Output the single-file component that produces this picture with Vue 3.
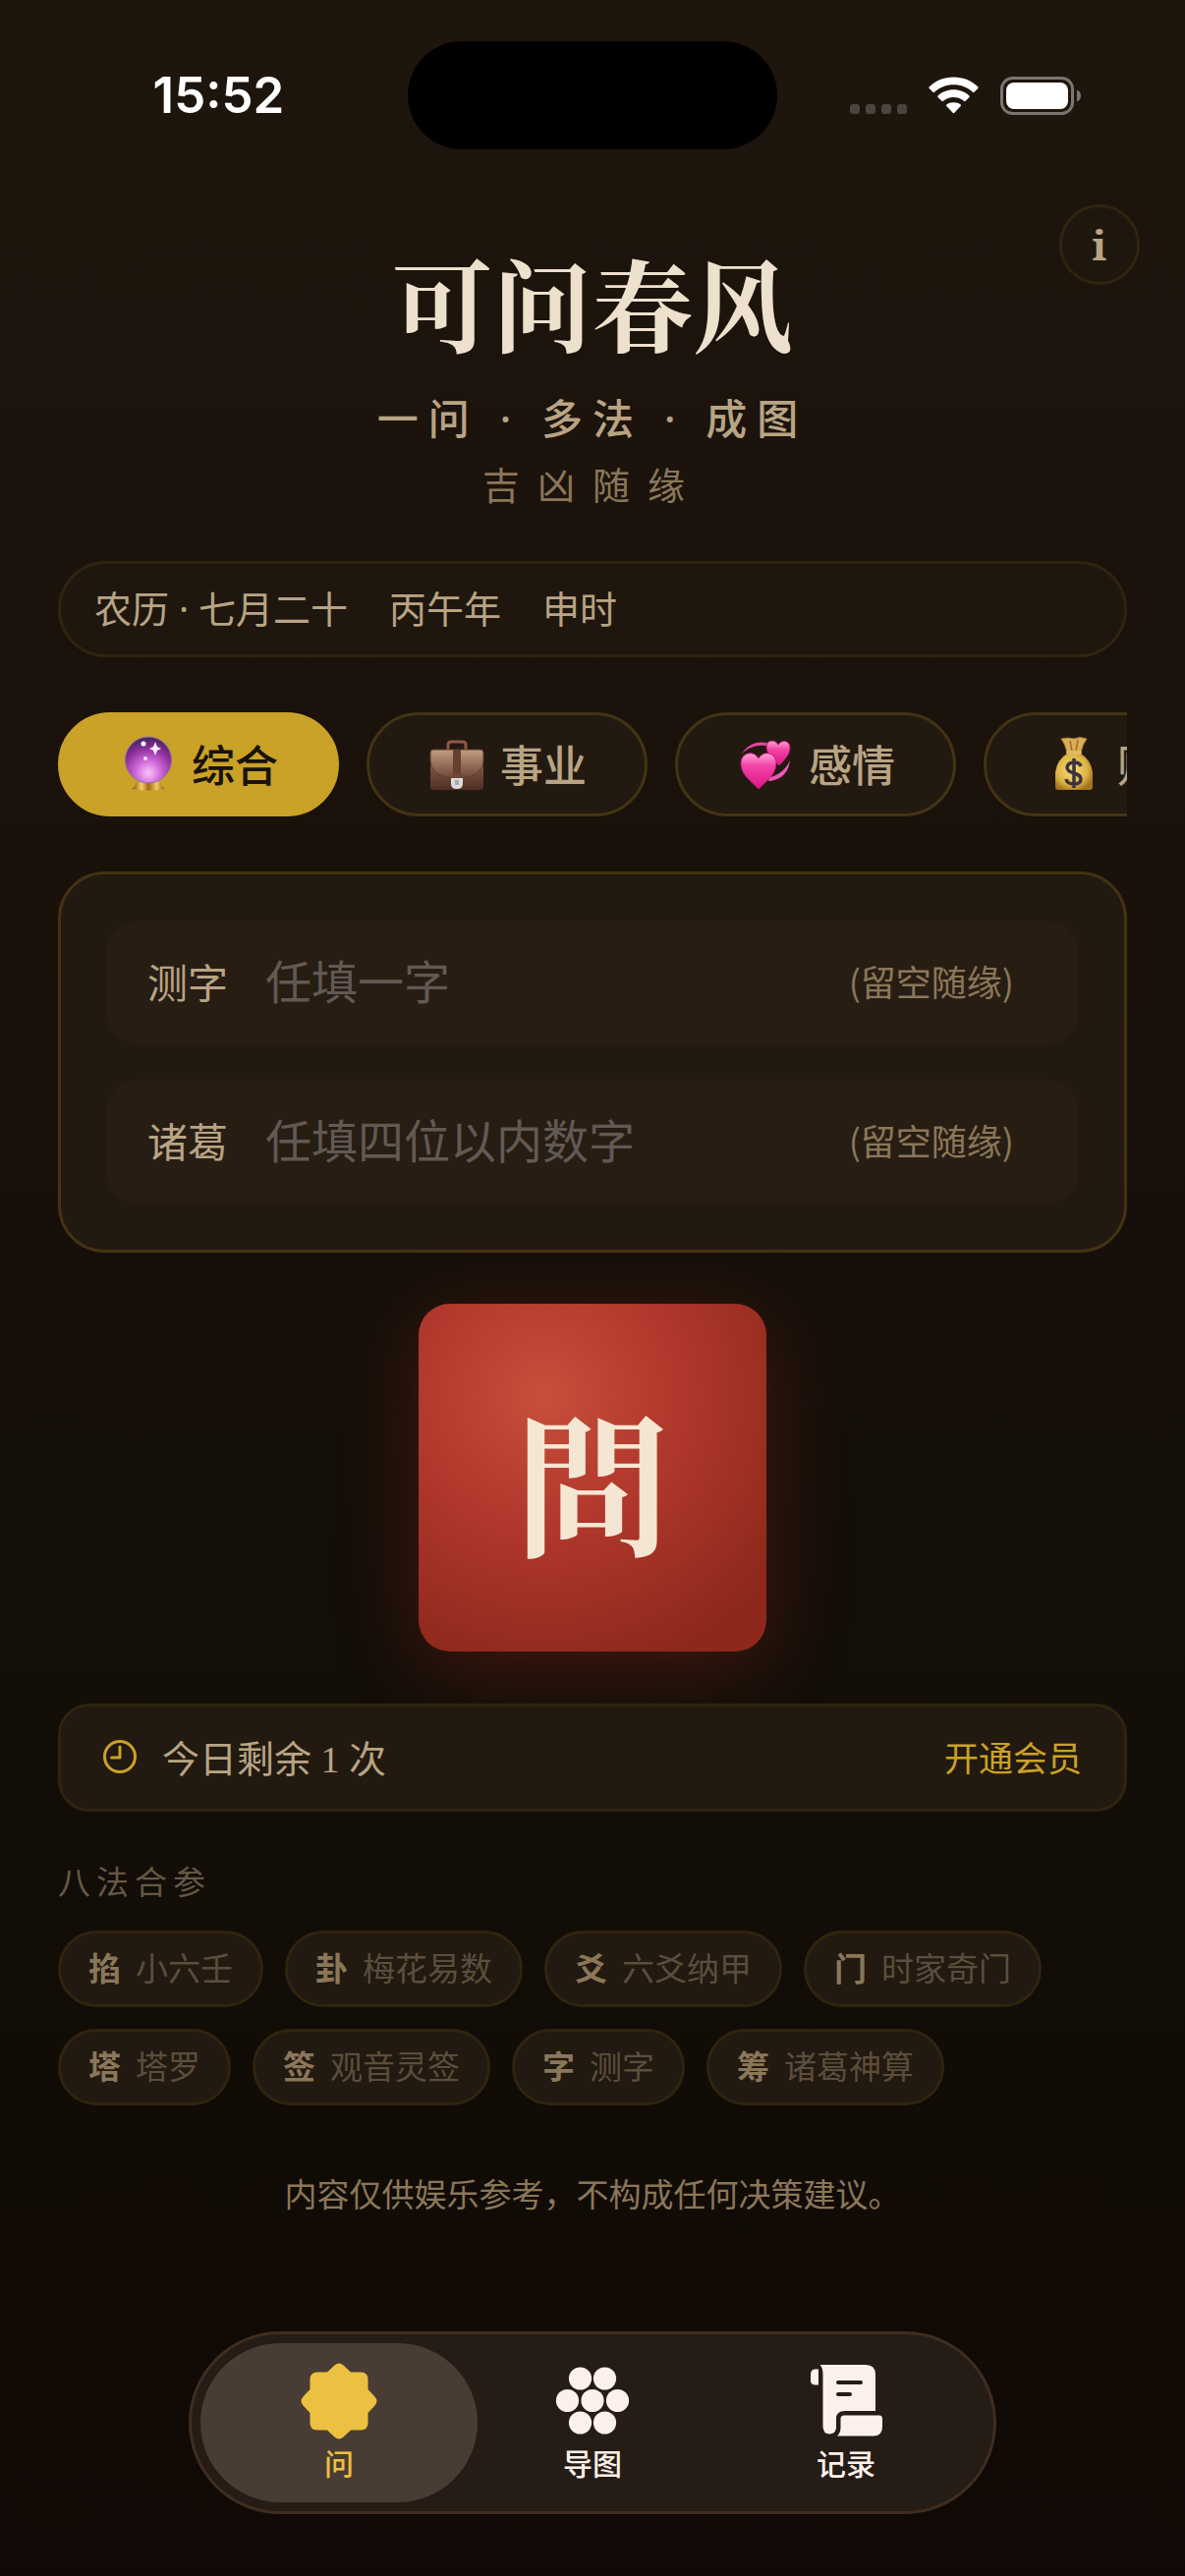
<script setup>
import { ref } from 'vue'

const topics = [
  { id: 'general', label: '综合' },
  { id: 'career', label: '事业' },
  { id: 'love', label: '感情' },
  { id: 'wealth', label: '财运' },
]
const activeTopic = ref('general')

const character = ref('')
const digits = ref('')

const methods = [
  { mark: '掐', name: '小六壬' },
  { mark: '卦', name: '梅花易数' },
  { mark: '爻', name: '六爻纳甲' },
  { mark: '门', name: '时家奇门' },
  { mark: '塔', name: '塔罗' },
  { mark: '签', name: '观音灵签' },
  { mark: '字', name: '测字' },
  { mark: '筹', name: '诸葛神算' },
]

const tabs = [
  { id: 'ask', label: '问' },
  { id: 'map', label: '导图' },
  { id: 'log', label: '记录' },
]
const activeTab = ref('ask')
</script>

<template>
  <div class="page">
    <div class="status">
      <span class="time">15:52</span>
      <span class="island"></span>
      <div class="signals">
        <svg class="dots" width="58" height="38" viewBox="0 0 58 38" fill="#4b443e">
          <rect x="0" y="28" width="10" height="10" rx="3" />
          <rect x="16" y="28" width="10" height="10" rx="3" />
          <rect x="32" y="28" width="10" height="10" rx="3" />
          <rect x="48" y="28" width="10" height="10" rx="3" />
        </svg>
        <svg width="51" height="38" viewBox="0 0 51 38" fill="#fff">
          <path d="M25.500 0.500C35.500 0.500 44 4.200 50.300 10.300Q51 11.200 50.300 12L46.500 15.800Q45.700 16.500 44.900 15.800C39.700 10.900 33 8.300 25.500 8.300S11.300 10.900 6.100 15.800Q5.300 16.500 4.500 15.800L0.700 12Q0 11.200 0.700 10.300C7 4.200 15.500 0.500 25.500 0.500Z" />
          <path d="M25.500 13.300C31.800 13.300 37.300 15.600 41.500 19.400Q42.200 20.200 41.500 21L37.600 24.800Q36.900 25.500 36 24.800C33.200 22.400 29.600 21 25.500 21S17.800 22.400 15 24.800Q14.100 25.500 13.400 24.800L9.500 21Q8.800 20.200 9.500 19.400C13.700 15.600 19.200 13.300 25.500 13.300Z" />
          <path d="M25.500 26.200C28.400 26.200 30.800 27 32.700 28.500Q33.500 29.300 32.700 30.100L26.400 36.800Q25.500 37.600 24.600 36.800L18.300 30.100Q17.500 29.300 18.300 28.500C20.200 27 22.600 26.200 25.500 26.200Z" />
        </svg>
        <svg width="82" height="39" viewBox="0 0 82 39">
          <rect x="1.500" y="1.500" width="72" height="36" rx="11" fill="none" stroke="#7b756f" stroke-width="3" />
          <rect x="6" y="6" width="63" height="27" rx="8" fill="#fff" />
          <path d="M78 13.500C80.500 14.500 82 16.800 82 19.500S80.500 24.500 78 25.500Z" fill="#7b756f" />
        </svg>
      </div>
    </div>

    <header class="hero">
      <button class="info" type="button" aria-label="关于">i</button>
      <h1>可问春风</h1>
      <p class="tagline">一问 · 多法 · 成图</p>
      <p class="motto">吉凶随缘</p>
    </header>

    <main class="content">
      <div class="lunar">
        <span>农历 · 七月二十</span>
        <span>丙午年</span>
        <span>申时</span>
      </div>

      <div class="topics">
        <button
          v-for="t in topics"
          :key="t.id"
          type="button"
          class="topic"
          :class="{ active: activeTopic === t.id }"
          @click="activeTopic = t.id"
        >
          <svg v-if="t.id === 'general'" class="emoji" viewBox="0 0 56 56">
            <defs>
              <radialGradient id="orb" cx="50%" cy="78%" r="75%">
                <stop offset="0" stop-color="#fbc4fb" />
                <stop offset=".35" stop-color="#cf6cda" />
                <stop offset=".7" stop-color="#92309f" />
                <stop offset="1" stop-color="#47265f" />
              </radialGradient>
              <linearGradient id="stand" x1="0" x2="1">
                <stop offset="0" stop-color="#7c4a12" />
                <stop offset=".3" stop-color="#f5d165" />
                <stop offset=".5" stop-color="#a8641b" />
                <stop offset=".75" stop-color="#f2cc5c" />
                <stop offset="1" stop-color="#8d5614" />
              </linearGradient>
            </defs>
            <path d="M16 46Q28 50 40 46Q41 52 45 54Q28 57 11 54Q15 52 16 46Z" fill="url(#stand)" />
            <circle cx="28" cy="24.500" r="23.500" fill="url(#orb)" stroke="#8f6fb0" stroke-width="1" />
            <path d="M35 6L37 11L41 13L37 15L35 20L33 15L29 13L33 11Z" fill="#ffe6ff" />
            <circle cx="23" cy="8" r="2.500" fill="#fff" />
            <circle cx="25" cy="23" r="2" fill="#fbdcff" />
          </svg>
          <svg v-else-if="t.id === 'career'" class="emoji" viewBox="0 0 56 56">
            <defs>
              <linearGradient id="bag" x1="0" x2="0" y1="0" y2="1">
                <stop offset="0" stop-color="#b98f73" />
                <stop offset=".4" stop-color="#805744" />
                <stop offset="1" stop-color="#4f2e25" />
              </linearGradient>
              <linearGradient id="flap" x1="0" x2="0" y1="0" y2="1">
                <stop offset="0" stop-color="#c39d80" />
                <stop offset="1" stop-color="#6c4434" />
              </linearGradient>
            </defs>
            <path d="M19 15V9Q19 6 22 6H34Q37 6 37 9V15" fill="none" stroke="#8f5a45" stroke-width="3" />
            <rect x="1" y="14" width="54" height="41" rx="3" fill="url(#bag)" />
            <path d="M1 17Q1 14 4 14H52Q55 14 55 17V26Q54 38 40 42Q28 45 16 42Q2 38 1 26Z" fill="url(#flap)" stroke="#5b392c" stroke-width="1" />
            <path d="M24 14H32V40H24Z" fill="#65402f" />
            <path d="M22 43Q22 38 28 38T34 43Z" fill="#714634" />
            <path d="M22 43H34V49Q34 54 28 54T22 49Z" fill="#dcdcdc" />
            <rect x="26" y="45" width="4" height="5" fill="#a9a9a9" />
          </svg>
          <svg v-else-if="t.id === 'love'" class="emoji" viewBox="0 0 56 56">
            <defs>
              <linearGradient id="heart" x1="0" x2="0" y1="0" y2="1">
                <stop offset="0" stop-color="#ffa5d5" />
                <stop offset=".35" stop-color="#f344a8" />
                <stop offset="1" stop-color="#dd1682" />
              </linearGradient>
            </defs>
            <path d="M4 18Q13 4 30 7L29 10Q15 8 4 18Z" fill="#df48a4" />
            <path d="M53 25Q51 43 33 46Q30 46 29 43Q46 40 53 25Z" fill="#ec58b2" />
            <path d="M42 30C36 24 29 18 29 11C29 4 38 3 41 9C45 3 53 5 53 12C53 19 47 25 42 30Z" fill="url(#heart)" stroke="#b31c72" stroke-width="1" />
            <path d="M21 54C13 46 3 39 3 28C3 17 16 14 21 23C26 14 39 17 39 28C39 39 29 46 21 54Z" fill="url(#heart)" stroke="#c51a78" stroke-width="1" />
          </svg>
          <svg v-else class="emoji" viewBox="0 0 56 56">
            <defs>
              <radialGradient id="sack" cx="45%" cy="45%" r="60%">
                <stop offset="0" stop-color="#f8dd78" />
                <stop offset=".7" stop-color="#dcb244" />
                <stop offset="1" stop-color="#a2741f" />
              </radialGradient>
            </defs>
            <path d="M15 3Q22 1 28 3Q34 0 41 3Q37 8 35 17H21Q19 8 15 3Z" fill="#d9ae55" stroke="#a57a30" stroke-width="1" />
            <path d="M24 5L26 16M32 4L30 16" stroke="#9d702b" stroke-width="1.500" />
            <path d="M21 18H35Q45 24 47 37V52Q47 55 44 55H12Q9 55 9 52V37Q11 24 21 18Z" fill="url(#sack)" />
            <rect x="20" y="15" width="16" height="4" rx="2" fill="#e2ba62" />
            <path d="M35 31Q34 27 28 27T21 32Q21 36 28 38T35 44Q35 49 28 49T20 44M28 23V53" fill="none" stroke="#3b3340" stroke-width="3.500" />
          </svg>
          <span>{{ t.label }}</span>
        </button>
      </div>

      <form class="card" @submit.prevent>
        <div class="field">
          <label for="character">测字</label>
          <input id="character" v-model="character" type="text" maxlength="1" placeholder="任填一字" />
          <span class="hint">(留空随缘)</span>
        </div>
        <div class="field">
          <label for="digits">诸葛</label>
          <input id="digits" v-model="digits" type="text" inputmode="numeric" maxlength="4" placeholder="任填四位以内数字" />
          <span class="hint">(留空随缘)</span>
        </div>
      </form>

      <button class="seal" type="button">問</button>

      <div class="quota">
        <svg width="34" height="34" viewBox="0 0 34 34" fill="none" stroke="#c9a227" stroke-width="3" stroke-linecap="round" stroke-linejoin="round">
          <circle cx="17" cy="17" r="15.500" />
          <path d="M17 7V18H8.500" />
        </svg>
        <span class="left">今日剩余 1 次</span>
        <a class="member" href="#member">开通会员</a>
      </div>

      <h2>八法合参</h2>
      <ul class="methods">
        <li v-for="m in methods" :key="m.name">
          <b>{{ m.mark }}</b>
          <span>{{ m.name }}</span>
        </li>
      </ul>

      <p class="notice">内容仅供娱乐参考，不构成任何决策建议。</p>
    </main>

    <nav class="tabs">
      <button
        v-for="t in tabs"
        :key="t.id"
        type="button"
        class="tab"
        :class="{ active: activeTab === t.id }"
        @click="activeTab = t.id"
      >
        <svg v-if="t.id === 'ask'" class="glyph" viewBox="0 0 78 78" fill="currentColor">
          <path d="M27 9.500L34.500 2.500Q39 -1.500 43.500 2.500L51 9.500H61Q68.500 9.500 68.500 17V27L75.500 34.500Q79.500 39 75.500 43.500L68.500 51V61Q68.500 68.500 61 68.500H51L43.500 75.500Q39 79.500 34.500 75.500L27 68.500H17Q9.500 68.500 9.500 61V51L2.500 43.500Q-1.500 39 2.500 34.500L9.500 27V17Q9.500 9.500 17 9.500Z" />
        </svg>
        <svg v-else-if="t.id === 'map'" class="glyph" viewBox="0 0 78 78" fill="currentColor">
          <circle cx="26.500" cy="16" r="11.600" />
          <circle cx="51.500" cy="16" r="11.600" />
          <circle cx="13.500" cy="38.500" r="11.600" />
          <circle cx="39" cy="38.500" r="11.600" />
          <circle cx="64.500" cy="38.500" r="11.600" />
          <circle cx="26.500" cy="61" r="11.600" />
          <circle cx="51.500" cy="61" r="11.600" />
        </svg>
        <svg v-else class="glyph" viewBox="0 0 78 78" fill="currentColor">
          <path d="M11 6.500V22.500H7Q3 22 3 18V12Q3 7 7 6.500Z" />
          <path fill-rule="evenodd" d="M12.500 2H59Q69 2 69 12V49H38Q29 49 29 57V66Q28.500 72.500 22 72.500Q16 72.500 15.500 65V12Q15.500 5 12.500 2ZM31 18Q29 18 29 20T31 22H54Q56 22 56 20T54 18ZM31 30Q29 30 29 32T31 34H43Q45 34 45 32T43 30Z" />
          <path d="M37 53.500H73Q76 53.500 76 57V65Q76 74.500 67 74.500H30Q33.500 71 33.500 66V57Q33.500 53.500 37 53.500Z" />
        </svg>
        <span>{{ t.label }}</span>
      </button>
    </nav>
  </div>
</template>

<style>
body {
  background: #100905;
}
</style>

<style scoped>
* {
  box-sizing: border-box;
}

.page {
  display: flex;
  flex-direction: column;
  min-height: 100vh;
  background: linear-gradient(#1e150d 0%, #1a110b 32%, #130e08 65%, #100905 100%);
  color: #b8a484;
  font-family: 'Noto Sans CJK SC', sans-serif;
}

button {
  margin: 0;
  padding: 0;
  border: 0;
  background: none;
  color: inherit;
  font: inherit;
  cursor: pointer;
}

h1,
h2,
p,
ul {
  margin: 0;
  padding: 0;
}

.status {
  display: grid;
  grid-template-columns: 1fr 376px 1fr;
  align-items: center;
  padding-top: 42px;
}

.time {
  justify-self: center;
  padding-left: 30px;
  color: #fff;
  font: 600 51px/60px Inter, sans-serif;
}

.island {
  height: 110px;
  border-radius: 55px;
  background: #000;
}

.signals {
  display: flex;
  justify-content: flex-end;
  align-items: center;
  gap: 22px;
  padding-right: 106px;
}

.hero {
  position: relative;
  padding-top: 95px;
  text-align: center;
}

.info {
  position: absolute;
  top: 56px;
  right: 46px;
  width: 82px;
  height: 82px;
  border: 3px solid #30240f;
  border-radius: 50%;
  background: #1f170e;
  font: 700 42px/60px 'Noto Serif', 'Liberation Serif', serif;
}

h1 {
  color: #ede0cc;
  font: 700 102px/120px 'Noto Serif CJK SC', 'Noto Sans CJK SC', serif;
}

.tagline {
  margin-top: 29px;
  font-family: 'Noto Sans', 'Noto Sans CJK SC', sans-serif;
  font-size: 42px;
  font-weight: 500;
  line-height: 60px;
  letter-spacing: 10px;
}

.motto {
  margin-top: 12px;
  color: #8a7759;
  font-size: 38px;
  line-height: 48px;
  letter-spacing: 18px;
}

.content {
  display: flex;
  flex-direction: column;
  padding: 55px 59px 0;
}

.lunar {
  display: flex;
  align-items: center;
  gap: 42px;
  height: 98px;
  padding: 0 34px 6px;
  border: 3px solid #30240f;
  border-radius: 49px;
  background: #1f170e;
  font-family: 'Noto Sans', 'Noto Sans CJK SC', sans-serif;
  font-size: 38px;
}

.topics {
  display: flex;
  gap: 28px;
  margin-top: 56px;
  overflow-x: auto;
  scrollbar-width: none;
}

.topic {
  display: flex;
  flex: none;
  align-items: center;
  justify-content: center;
  gap: 16px;
  width: 286px;
  height: 106px;
  padding-left: 2px;
  padding-bottom: 2px;
  border: 3px solid #443313;
  border-radius: 53px;
  background: #221910;
  font-size: 44px;
  font-weight: 500;
}

.topic.active {
  border-color: #c9a227;
  background: #c9a227;
  color: #1a120b;
}

.emoji {
  width: 56px;
  height: 56px;
}

.card {
  display: flex;
  flex-direction: column;
  gap: 36px;
  margin-top: 56px;
  padding: 47px 46px;
  border: 3px solid #443313;
  border-radius: 48px;
  background: #221910;
}

.field {
  display: flex;
  align-items: center;
  height: 126px;
  padding: 0 66px 4px 42px;
  border-radius: 32px;
  background: #271d13;
}

.field label {
  flex: none;
  width: 120px;
  font-size: 41px;
}

.field input {
  flex: 1;
  min-width: 0;
  height: 72px;
  padding: 0 0 4px;
  border: 0;
  outline: 0;
  background: none;
  color: #ede0cc;
  font-family: inherit;
  font-size: 47px;
}

.field input::placeholder {
  color: #625955;
  opacity: 1;
}

.hint {
  color: #8a7759;
  font-size: 36px;
}

.seal {
  align-self: center;
  width: 354px;
  height: 354px;
  margin-top: 52px;
  padding-top: 2px;
  border-radius: 32px;
  background: radial-gradient(circle 290px at 36% 26%, #c64f3d, #b0372b 48%, #8e281c);
  box-shadow: 0 18px 84px rgba(176, 48, 36, 0.3);
  color: #f5e6d3;
  font: 700 156px/200px 'Noto Serif CJK SC', 'Noto Sans CJK SC', serif;
}

.quota {
  display: flex;
  align-items: center;
  height: 110px;
  margin-top: 53px;
  padding: 0 43px 2px;
  border: 3px solid #30240f;
  border-radius: 32px;
  background: #221910;
}

.left {
  flex: 1;
  margin-left: 26px;
  padding-bottom: 2px;
  font-family: 'Liberation Serif', 'Noto Sans CJK SC', serif;
  font-size: 38px;
}

.member {
  padding-bottom: 2px;
  color: #c9a227;
  font-size: 35px;
  text-decoration: none;
}

h2 {
  margin-top: 46px;
  color: #655844;
  font-size: 33px;
  font-weight: 400;
  line-height: 48px;
  letter-spacing: 6px;
}

.methods {
  display: flex;
  flex-wrap: wrap;
  gap: 22px;
  margin-top: 27px;
  list-style: none;
}

.methods li {
  display: flex;
  align-items: center;
  gap: 15px;
  height: 78px;
  padding: 0 28px 4px;
  border: 3px solid #30240f;
  border-radius: 39px;
  background: #221910;
  color: #5c4e3c;
  font-size: 33px;
}

.methods b {
  color: #8a7759;
  font-weight: 700;
}

.notice {
  margin-top: 65px;
  color: #8a7759;
  font-size: 33px;
  line-height: 48px;
  text-align: center;
}

.tabs {
  display: grid;
  grid-template-columns: repeat(3, 258px);
  align-self: center;
  margin: auto 0 63px;
  padding: 9px 21px;
  border: 3px solid #3f2d20;
  border-radius: 93px;
  background: #261c16;
  color: #fbf1ea;
}

.tab {
  display: flex;
  flex-direction: column;
  align-items: center;
  justify-content: center;
  gap: 2px;
  height: 162px;
  margin: 0 -12px;
  border-radius: 81px;
  font-size: 30px;
  font-weight: 500;
  line-height: 42px;
}

.tab.active {
  background: #483c34;
  color: #ecc040;
}

.glyph {
  width: 78px;
  height: 78px;
}
</style>
